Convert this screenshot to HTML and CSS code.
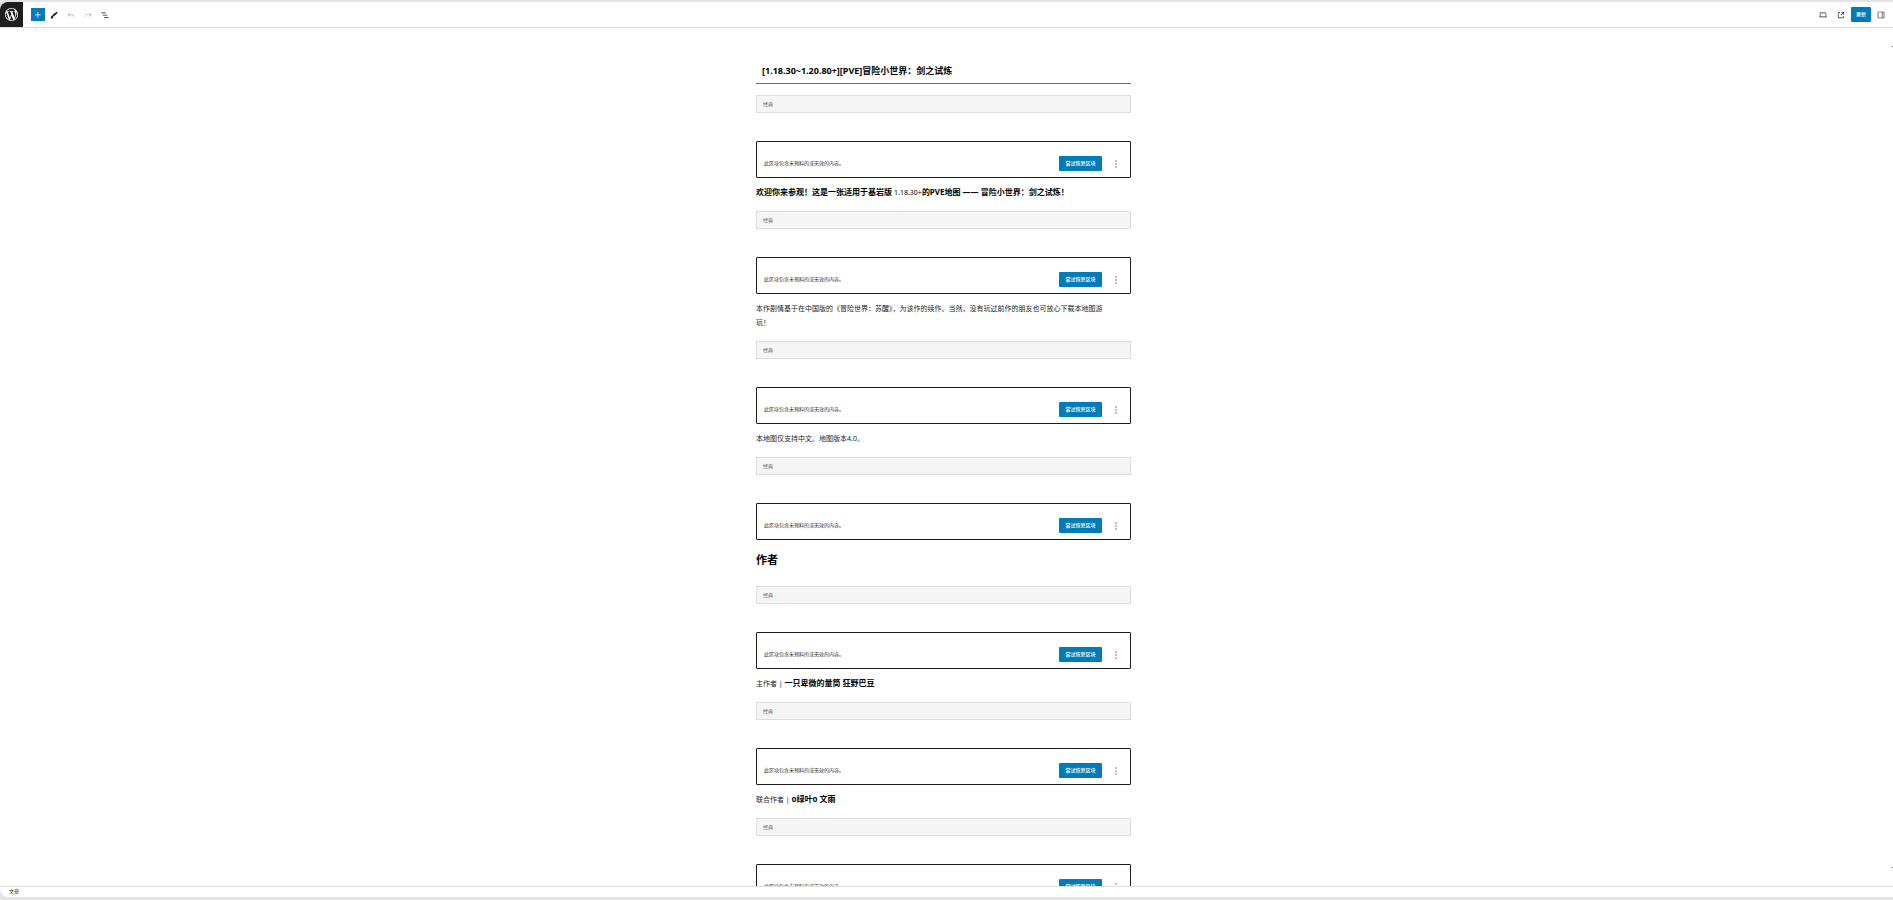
FILE: index.html
```html
<!DOCTYPE html>
<html lang="zh-CN">

<head>
  <meta charset="UTF-8" />
  <meta name="viewport" content="width=device-width, initial-scale=1.0" />
  <title>编辑文章</title>
  <link rel="stylesheet" href="styles.css">
</head>

<body>
  <div class="editor">
    <!-- Top toolbar -->
    <header class="toolbar">
      <a href="#" class="logo" aria-label="查看文章">
        <svg viewBox="0 0 20 20"><path d="M20 10c0-5.51-4.49-10-10-10C4.48 0 0 4.49 0 10c0 5.52 4.48 10 10 10 5.51 0 10-4.48 10-10zM7.78 15.37L4.37 6.22c.55-.02 1.17-.08 1.17-.08.5-.06.44-1.13-.06-1.11 0 0-1.45.11-2.37.11-.18 0-.37 0-.58-.01C4.12 2.69 6.87 1.11 10 1.11c2.33 0 4.45.87 6.05 2.34-.68-.11-1.65.39-1.65 1.58 0 .74.45 1.36.9 2.1.35.61.55 1.36.55 2.46 0 1.49-1.4 5-1.4 5l-3.03-8.37c.54-.02.82-.17.82-.17.5-.05.44-1.25-.06-1.22 0 0-1.44.12-2.38.12-.87 0-2.33-.12-2.33-.12-.5-.03-.56 1.2-.06 1.22l.92.08 1.26 3.41zM17.41 10c.24-.64.74-1.87.43-4.25.7 1.29 1.05 2.71 1.05 4.25 0 3.29-1.73 6.24-4.4 7.78.97-2.59 1.94-5.2 2.92-7.78zM6.1 18.09C3.12 16.65 1.11 13.53 1.11 10c0-1.3.23-2.48.72-3.59C3.25 10.3 4.67 14.2 6.1 18.09zm4.03-6.63l2.58 6.98c-.86.29-1.76.45-2.71.45-.79 0-1.57-.11-2.29-.33.81-2.38 1.62-4.74 2.42-7.1z"/></svg>
      </a>
      <div class="tools">
        <button type="button" class="inserter" aria-label="添加区块">
          <svg viewBox="0 0 24 24"><path d="M11 12.5V17.5H12.5V12.5H17.5V11H12.5V6H11V11H6V12.5H11Z"/></svg>
        </button>
        <button type="button" class="tool" aria-label="工具">
          <svg viewBox="0 0 24 24"><path d="M18.5 4l2.5 2.4-9.500 9.200-3.600-3.600zM7.200 12.800l3.600 3.600-1.500 3.100-5.300 1.500 1-5.200z"/></svg>
        </button>
        <button type="button" class="tool" aria-label="撤销" disabled>
          <svg viewBox="0 0 24 24"><path d="M18.3 11.7c-.6-.6-1.4-.9-2.3-.9H6.700l2.900-3.300-1.100-1-4.500 5L8.500 16l1-1-2.700-2.700H16c.5 0 .9.2 1.300.5 1 1 1 3.400 1 4.500v.3h1.500v-.2c0-1.500 0-4.300-1.500-5.700z"/></svg>
        </button>
        <button type="button" class="tool" aria-label="重做" disabled>
          <svg viewBox="0 0 24 24"><path d="M15.6 6.500l-1.100 1 2.900 3.300H8c-.9 0-1.700.3-2.300.9-1.400 1.500-1.400 4.200-1.400 5.600v.2h1.500v-.3c0-1.100 0-3.500 1-4.500.3-.3.7-.5 1.300-.5h9.200L14.500 15l1.100 1.100 4.600-4.600-4.600-5z"/></svg>
        </button>
        <button type="button" class="tool" aria-label="文档概览">
          <svg viewBox="0 0 24 24"><path d="M3 6h11v1.500H3V6Zm3.500 5.500h11V13h-11v-1.500ZM21 17H10v1.500h11V17Z"/></svg>
        </button>
      </div>
      <div class="settings">
        <button type="button" class="tool" aria-label="预览">
          <svg viewBox="0 0 24 24"><path d="M20.500 16h-.7V8c0-1.100-.9-2-2-2H6.200c-1.100 0-2 .9-2 2v8h-.7c-.8 0-1.500.7-1.500 1.500h20c0-.8-.7-1.500-1.500-1.500zM5.700 8c0-.3.2-.5.5-.5h11.600c.3 0 .5.2.5.5v7.600H5.700V8z"/></svg>
        </button>
        <a href="#" class="tool" aria-label="在新窗口查看">
          <svg viewBox="0 0 24 24"><path d="M19.500 4.500h-7V6h4.440l-5.970 5.970 1.060 1.060L18 7.060v4.440h1.500v-7Zm-13 1a2 2 0 0 0-2 2v10a2 2 0 0 0 2 2h10a2 2 0 0 0 2-2v-3H17v3a.5.5 0 0 1-.5.5h-10a.5.5 0 0 1-.5-.5v-10a.5.5 0 0 1 .5-.5h3V5.500h-3Z"/></svg>
        </a>
        <button type="button" class="btn update">更新</button>
        <button type="button" class="tool" aria-label="设置">
          <svg viewBox="0 0 24 24"><path d="M18 4H6c-1.100 0-2 .9-2 2v12c0 1.100.9 2 2 2h12c1.100 0 2-.9 2-2V6c0-1.100-.9-2-2-2zm-4 14.500H6c-.3 0-.5-.2-.5-.5V6c0-.3.2-.5.5-.5h8v13zm4.500-.5c0 .3-.2.5-.5.5h-2.500v-13H18c.3 0 .5.2.5.5v12z"/></svg>
        </button>
      </div>
    </header>

    <!-- Post content -->
    <main class="canvas">
      <article class="post">
        <h1>[1.18.30~1.20.80+][PVE]冒险小世界：剑之试炼</h1>

        <div class="classic">经典</div>
        <div class="warning">
          <p class="message">此区块包含未预料的或无效的内容。</p>
          <button type="button" class="btn recover">尝试恢复区块</button>
          <button type="button" class="more" aria-label="更多选项"><svg viewBox="0 0 24 24"><path d="M13 19h-2v-2h2v2zm0-6h-2v-2h2v2zm0-6h-2V5h2v2z"/></svg></button>
        </div>
        <p class="text"><strong>欢迎你来参观！这是一张适用于基岩版 <span class="version">1.18.30+</span>的PVE地图 —— 冒险小世界：剑之试炼！</strong></p>

        <div class="classic">经典</div>
        <div class="warning">
          <p class="message">此区块包含未预料的或无效的内容。</p>
          <button type="button" class="btn recover">尝试恢复区块</button>
          <button type="button" class="more" aria-label="更多选项"><svg viewBox="0 0 24 24"><path d="M13 19h-2v-2h2v2zm0-6h-2v-2h2v2zm0-6h-2V5h2v2z"/></svg></button>
        </div>
        <p class="text">本作剧情基于在中国版的《冒险世界：苏醒》，为该作的续作。当然，没有玩过前作的朋友也可放心下载本地图游<br>玩！</p>

        <div class="classic">经典</div>
        <div class="warning">
          <p class="message">此区块包含未预料的或无效的内容。</p>
          <button type="button" class="btn recover">尝试恢复区块</button>
          <button type="button" class="more" aria-label="更多选项"><svg viewBox="0 0 24 24"><path d="M13 19h-2v-2h2v2zm0-6h-2v-2h2v2zm0-6h-2V5h2v2z"/></svg></button>
        </div>
        <p class="text">本地图仅支持中文。地图版本4.0。</p>

        <div class="classic">经典</div>
        <div class="warning">
          <p class="message">此区块包含未预料的或无效的内容。</p>
          <button type="button" class="btn recover">尝试恢复区块</button>
          <button type="button" class="more" aria-label="更多选项"><svg viewBox="0 0 24 24"><path d="M13 19h-2v-2h2v2zm0-6h-2v-2h2v2zm0-6h-2V5h2v2z"/></svg></button>
        </div>
        <h2>作者</h2>

        <div class="classic">经典</div>
        <div class="warning">
          <p class="message">此区块包含未预料的或无效的内容。</p>
          <button type="button" class="btn recover">尝试恢复区块</button>
          <button type="button" class="more" aria-label="更多选项"><svg viewBox="0 0 24 24"><path d="M13 19h-2v-2h2v2zm0-6h-2v-2h2v2zm0-6h-2V5h2v2z"/></svg></button>
        </div>
        <p class="text">主作者 | <strong>一只卑微的量筒 狂野巴豆</strong></p>

        <div class="classic">经典</div>
        <div class="warning">
          <p class="message">此区块包含未预料的或无效的内容。</p>
          <button type="button" class="btn recover">尝试恢复区块</button>
          <button type="button" class="more" aria-label="更多选项"><svg viewBox="0 0 24 24"><path d="M13 19h-2v-2h2v2zm0-6h-2v-2h2v2zm0-6h-2V5h2v2z"/></svg></button>
        </div>
        <p class="text">联合作者 | <strong>o绿叶o 文雨</strong></p>

        <div class="classic">经典</div>
        <div class="warning">
          <p class="message">此区块包含未预料的或无效的内容。</p>
          <button type="button" class="btn recover">尝试恢复区块</button>
          <button type="button" class="more" aria-label="更多选项"><svg viewBox="0 0 24 24"><path d="M13 19h-2v-2h2v2zm0-6h-2v-2h2v2zm0-6h-2V5h2v2z"/></svg></button>
        </div>
      </article>
    </main>

    <footer class="breadcrumb">文章</footer>
  </div>
</body>

</html>
```
FILE: styles.css
```css
* {
  margin: 0;
  padding: 0;
  box-sizing: border-box;
}

body {
  height: 100vh;
  padding: 2px 0 3px;
  background: #e4e4e4;
  color: #1e1e1e;
  font-family: "Noto Sans", "Noto Sans CJK SC", sans-serif;
  overflow: hidden;
}

button {
  border: none;
  background: none;
  font-family: inherit;
  cursor: pointer;
}

svg {
  display: block;
  fill: currentColor;
}

.editor {
  display: flex;
  flex-direction: column;
  height: 100%;
  background: #fff;
  border-radius: 8px 0 0 8px;
  overflow: hidden;
}

/* Toolbar */
.toolbar {
  display: flex;
  flex: none;
  align-items: center;
  height: 26px;
  border-bottom: 1px solid #ddd;
}

.logo {
  display: flex;
  align-items: center;
  justify-content: center;
  align-self: stretch;
  width: 23px;
  background: #1e1e1e;
  color: #fff;
}

.logo svg {
  width: 13px;
  height: 13px;
}

.tools {
  display: flex;
  align-items: center;
  margin-left: 8px;
}

.inserter {
  display: flex;
  align-items: center;
  justify-content: center;
  width: 14px;
  height: 13px;
  background: #007cba;
  color: #fff;
}

.inserter svg {
  width: 12px;
  height: 12px;
}

.tool svg {
  width: 10px;
  height: 10px;
}

.tool {
  display: flex;
  align-items: center;
  justify-content: center;
  width: 17px;
  height: 18px;
  color: #1e1e1e;
}

.tool:disabled {
  color: #aaa;
}

.settings {
  display: flex;
  align-items: center;
  gap: 1px;
  margin-left: auto;
  padding-right: 4px;
}

.btn {
  height: 15px;
  background: #007cba;
  border-radius: 1px;
  color: #fff;
  font-size: 5px;
  font-weight: 500;
  line-height: 15px;
}

.update {
  width: 20px;
  margin-left: 1px;
}

/* Canvas */
.canvas {
  position: relative;
  flex: 1;
  min-height: 0;
  padding: 31px 6px 0 0;
  overflow: hidden;
}

/* Scrollbar ends */
.canvas::before,
.canvas::after {
  content: "";
  position: absolute;
  right: 0;
  width: 1px;
  height: 1px;
  background: #555;
}

.canvas::before {
  top: 18px;
}

.canvas::after {
  bottom: 18px;
}

.post {
  width: 100%;
  max-width: 375px;
  margin: 0 auto;
}

h1 {
  margin-bottom: 11px;
  padding-left: 6px;
  border-bottom: 1px solid #2f7fb5;
  color: #000;
  font-size: 9px;
  font-weight: 700;
  line-height: 24px;
}

h2 {
  margin: 10px 0 16px;
  color: #000;
  font-size: 11px;
  font-weight: 700;
  line-height: 20px;
}

.classic {
  height: 18px;
  margin-bottom: 28px;
  padding-left: 6px;
  background: #f5f5f5;
  border: 1px solid #ddd;
  color: #666;
  font-size: 5px;
  line-height: 16px;
}

.warning {
  display: flex;
  align-items: center;
  padding: 14px 8px 6px 7px;
  border: 1px solid #1e1e1e;
  border-radius: 1px;
}

.message {
  flex: 1;
  color: #333;
  font-size: 5px;
  line-height: 15px;
}

.recover {
  width: 43px;
}

.more {
  margin-left: 8px;
}

.more svg {
  width: 12px;
  height: 12px;
}

.text {
  margin: 8px 0 11px;
  font-size: 7px;
  line-height: 14px;
}

.text strong {
  color: #000;
  font-size: 8px;
  line-height: 8px;
}

.text .version {
  font-size: 7px;
  font-weight: 400;
}

/* Footer */
.breadcrumb {
  flex: none;
  height: 11px;
  padding-left: 9px;
  border-top: 1px solid #ddd;
  font-size: 5px;
  line-height: 9px;
}
```
